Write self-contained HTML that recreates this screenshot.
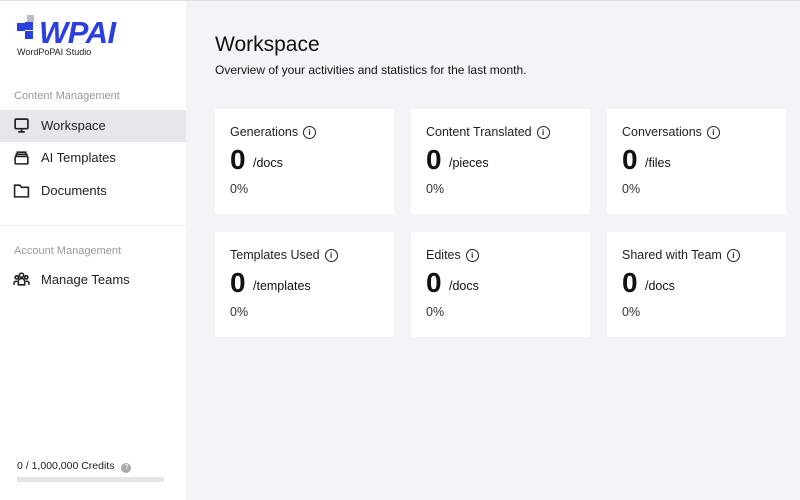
<!DOCTYPE html><html><head><style>
*{margin:0;padding:0;box-sizing:border-box}
body{width:800px;height:500px;background:#f3f4f6;font-family:"Liberation Sans",sans-serif;position:relative;overflow:hidden;color:#111}
.top{position:absolute;top:0;left:0;width:800px;height:1px;background:#ddd}
.side{position:absolute;left:0;top:1px;width:186px;height:499px;background:#fff}
.sec{position:absolute;left:14px;font-size:11px;color:#999}
.item{position:absolute;left:0;width:186px;height:32px;font-size:13px;color:#222;padding-left:41px;line-height:32px}
.item svg{position:absolute;left:13px;top:7px}
.card{position:absolute;width:179px;height:105px;background:#fff;border-radius:2px}
.card .t{position:absolute;left:15px;top:16px;font-size:12.5px;color:#222}
.card .t i{display:inline-block;width:13px;height:13px;border:1.3px solid #222;border-radius:50%;font-style:normal;font-size:8px;text-align:center;line-height:11px;margin-left:5px;vertical-align:1px;font-weight:bold}
.card .n{position:absolute;left:15px;top:35px;font-size:28px;font-weight:bold}
.card .u{position:absolute;left:38px;top:47px;font-size:12.5px}
.card .p{position:absolute;left:15px;top:73px;font-size:12.5px;color:#333}
</style></head><body>
<div class="top"></div>
<div class="side">
<div style="position:absolute;left:27px;top:14px;width:7px;height:7px;background:#b9bcc4"></div>
<div style="position:absolute;left:17px;top:22px;width:8px;height:8px;background:#2b3fe0"></div>
<div style="position:absolute;left:25px;top:21px;width:8px;height:8px;background:#2b3fe0"></div>
<div style="position:absolute;left:25px;top:30px;width:8px;height:8px;background:#2b3fe0"></div>
<div style="position:absolute;left:39px;top:14px;font-size:31px;font-weight:bold;font-style:italic;color:#2b3fe0;letter-spacing:-0.5px">WPAI</div>
<div style="position:absolute;left:17px;top:46px;font-size:9px;color:#222">WordPoPAI Studio</div>
<div class="sec" style="top:89px">Content Management</div>
<div class="item" style="top:109px;background:#e5e7eb">
<svg width="17" height="17" viewBox="0 0 16 16" fill="none" stroke="#222" stroke-width="1.6"><rect x="2" y="2" width="12" height="9" rx="1"/><path d="M5 14h6M8 11v3"/></svg>Workspace</div>
<div class="item" style="top:141px"><svg width="17" height="17" viewBox="0 0 16 16" fill="none" stroke="#222" stroke-width="1.5"><rect x="2" y="7" width="12" height="7" rx="1"/><path d="M3 7V5h10v2M4 5V3h8v2"/></svg>AI Templates</div>
<div class="item" style="top:174px"><svg width="17" height="17" viewBox="0 0 16 16" fill="none" stroke="#222" stroke-width="1.5"><path d="M1.5 3h5l1.5 2h6.5v9h-13z"/></svg>Documents</div>
<div style="position:absolute;left:0;top:224px;width:186px;height:1px;background:#eee"></div>
<div class="sec" style="top:244px">Account Management</div>
<div class="item" style="top:263px"><svg width="17" height="17" viewBox="0 0 16 16" fill="none" stroke="#222" stroke-width="1.5"><circle cx="8" cy="4" r="2"/><circle cx="3.5" cy="6" r="1.5"/><circle cx="12.5" cy="6" r="1.5"/><path d="M5 13v-3a3 3 0 016 0v3zM1 13v-2a2 2 0 013-1M15 13v-2a2 2 0 00-3-1"/></svg>Manage Teams</div>
<div style="position:absolute;left:17px;top:459px;font-size:10.5px;color:#222">0 / 1,000,000 Credits <span style="display:inline-block;width:10px;height:10px;border-radius:50%;background:#aaa;color:#fff;font-size:7px;text-align:center;line-height:10px;margin-left:4px">?</span></div>
<div style="position:absolute;left:17px;top:476px;width:147px;height:5px;background:#e5e5e5"></div>
</div>
<div style="position:absolute;left:215px;top:33px;font-size:21px">Workspace</div>
<div style="position:absolute;left:215px;top:63px;font-size:12px">Overview of your activities and statistics for the last month.</div>
<div class="card" style="left:215px;top:109px"><div class="t">Generations<i>i</i></div><div class="n">0</div><div class="u">/docs</div><div class="p">0%</div></div>
<div class="card" style="left:411px;top:109px"><div class="t">Content Translated<i>i</i></div><div class="n">0</div><div class="u">/pieces</div><div class="p">0%</div></div>
<div class="card" style="left:607px;top:109px"><div class="t">Conversations<i>i</i></div><div class="n">0</div><div class="u">/files</div><div class="p">0%</div></div>
<div class="card" style="left:215px;top:232px"><div class="t">Templates Used<i>i</i></div><div class="n">0</div><div class="u">/templates</div><div class="p">0%</div></div>
<div class="card" style="left:411px;top:232px"><div class="t">Edites<i>i</i></div><div class="n">0</div><div class="u">/docs</div><div class="p">0%</div></div>
<div class="card" style="left:607px;top:232px"><div class="t">Shared with Team<i>i</i></div><div class="n">0</div><div class="u">/docs</div><div class="p">0%</div></div>
</body></html>
